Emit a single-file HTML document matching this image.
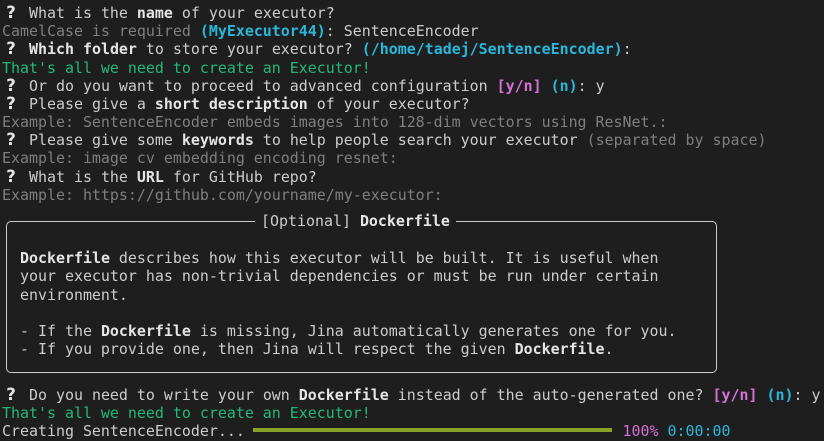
<!DOCTYPE html><html><head><style>
body{margin:0;background:#1e1e1e;width:824px;height:441px;overflow:hidden;position:relative}
pre{margin:0;position:absolute;left:2px;top:4px;font-family:"DejaVu Sans Mono","Liberation Mono",monospace;font-size:14.95px;line-height:18.17px;color:#cccccc}
b{font-weight:bold;color:#e5e5e5}
.q{display:inline-block;width:18px;text-align:center;font-weight:bold;color:#e5e5e5;font-size:16.5px;font-family:"DejaVu Sans",sans-serif;line-height:10px}
.g{color:#7f7f7f}.c{color:#29b8db;font-weight:bold}.cn{color:#29b8db}.gr{color:#23b87a}.m{color:#d670d6;font-weight:bold}.mn{color:#d670d6}
.box{position:absolute;left:6px;top:221px;width:709px;height:150px;border:1.5px solid #cccccc;border-radius:5px}
.t{position:absolute;left:255px;top:211px;background:#1e1e1e;font-family:"DejaVu Sans Mono",monospace;font-size:14.95px;line-height:20px;color:#ccc;padding:0 6px}
.bar{position:absolute;left:253px;top:428px;width:359px;height:4px;background:#8aa22a}
.in{position:relative;top:9px}
</style></head><body>
<div class="box"></div>
<div class="t">[Optional] <b>Dockerfile</b></div>
<div class="bar"></div>
<pre><span class="q">?</span> What is the <b>name</b> of your executor?
<span class="g">CamelCase is required</span> <span class="c">(MyExecutor44)</span>: SentenceEncoder
<span class="q">?</span> <b>Which folder</b> to store your executor? <span class="c">(/home/tadej/SentenceEncoder)</span>:
<span class="gr">That's all we need to create an Executor!</span>
<span class="q">?</span> Or do you want to proceed to advanced configuration <span class="m">[y/n]</span> <span class="c">(n)</span>: y
<span class="q">?</span> Please give a <b>short description</b> of your executor?
<span class="g">Example: SentenceEncoder embeds images into 128-dim vectors using ResNet.:</span>
<span class="q">?</span> Please give some <b>keywords</b> to help people search your executor <span class="g">(separated by space)</span>
<span class="g">Example: image cv embedding encoding resnet:</span>
<span class="q">?</span> What is the <b>URL</b> for GitHub repo?
<span class="g">Example: https://github.com/yourname/my-executor:</span>


<span class="in">  <b>Dockerfile</b> describes how this executor will be built. It is useful when</span>
<span class="in">  your executor has non-trivial dependencies or must be run under certain</span>
<span class="in">  environment.</span>

<span class="in">  - If the <b>Dockerfile</b> is missing, Jina automatically generates one for you.</span>
<span class="in">  - If you provide one, then Jina will respect the given <b>Dockerfile</b>.</span>


<span class="q">?</span> Do you need to write your own <b>Dockerfile</b> instead of the auto-generated one? <span class="m">[y/n]</span> <span class="c">(n)</span>: y
<span class="gr">That's all we need to create an Executor!</span>
Creating SentenceEncoder...                                          <span class="mn">100%</span> <span class="cn">0:00:00</span></pre>
</body></html>
